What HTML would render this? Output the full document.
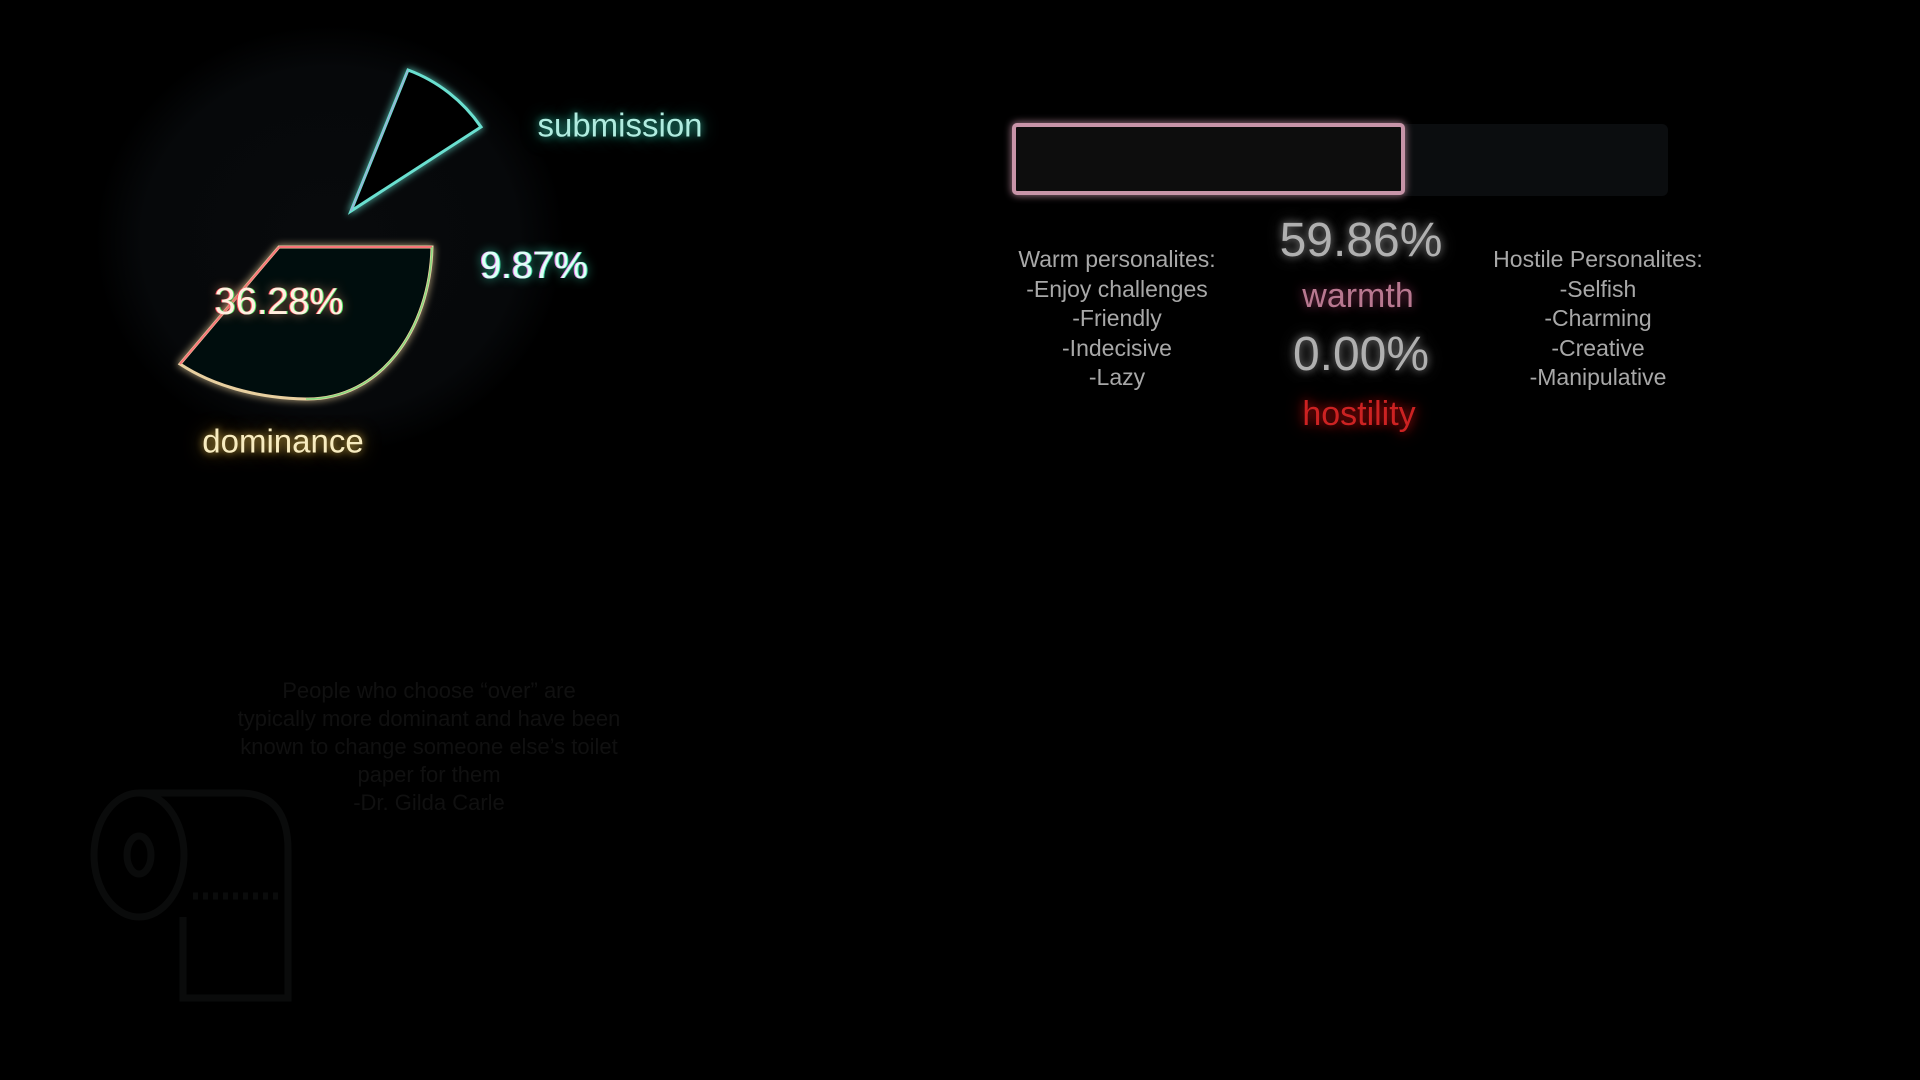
<!DOCTYPE html>
<html><head><meta charset="utf-8"><style>
html,body{margin:0;padding:0;background:#000;width:1920px;height:1080px;overflow:hidden;font-family:"Liberation Sans",sans-serif}
.t{position:absolute;white-space:nowrap;transform:translate(-50%,-50%);line-height:1}
.list{position:absolute;text-align:center;color:#a8a8a8;font-size:23px;line-height:29.5px;transform:translateX(-50%);white-space:nowrap}
</style></head><body>
<svg width="1920" height="1080" style="position:absolute;left:0;top:0">
<defs>
<filter id="g" x="-50%" y="-50%" width="200%" height="200%"><feGaussianBlur stdDeviation="4" result="b"/><feMerge><feMergeNode in="b"/><feMergeNode in="SourceGraphic"/></feMerge></filter>
<radialGradient id="bg" cx="50%" cy="50%" r="50%"><stop offset="0" stop-color="#080a0c"/><stop offset="0.8" stop-color="#06080a"/><stop offset="1" stop-color="#000"/></radialGradient>
</defs>
<ellipse cx="330" cy="240" rx="235" ry="215" fill="url(#bg)"/>
<!-- submission slice -->
<path d="M408,70 L351,211 L481,127 A153 153 0 0 0 408,70 Z" fill="#030404" stroke="#6ae0d0" stroke-width="3" filter="url(#g)"/>
<path d="M408,70 L351,211" stroke="#e070e0" stroke-width="1" opacity="0.6"/>
<!-- dominance slice -->
<path d="M279,247 L432,247 C430,330 380,400 306,399 C255,398 212,385 180,364 Z" fill="#060809" stroke="#e8d0a0" stroke-width="3" filter="url(#g)"/>
<path d="M279,247 L432,247 M279,247 L180,364" stroke="#ff6070" stroke-width="2" opacity="0.8"/>
<path d="M432,247 C430,330 380,400 306,399" stroke="#60e070" stroke-width="1.5" fill="none" opacity="0.7"/>
<!-- bar -->
<rect x="1400" y="124" width="268" height="72" rx="6" fill="#0b0d0f"/>
<rect x="1014" y="125" width="389" height="68" rx="3" fill="#0d0e10" stroke="#c894a8" stroke-width="4" filter="url(#g)"/>
<!-- toilet roll -->
<g fill="none" stroke="#0a0b0b" stroke-width="7">
<ellipse cx="139" cy="855" rx="45" ry="62"/>
<ellipse cx="139" cy="855" rx="12" ry="19"/>
<path d="M139,793 L240,793 Q288,793 288,850 L288,998 L183,998 L183,917"/>
<path d="M193,896 L282,896" stroke-dasharray="5 5"/>
</g>
</svg>
<div class="t" style="left:620px;top:125px;font-size:33px;color:#b0ece0;text-shadow:0 0 8px #2ea890,0 0 18px #1a7a68">submission</div>
<div class="t" style="left:534px;top:266px;font-size:38px;color:#e0fff8;text-shadow:-1px 0 #e070e0,1px 0 #40e0a0,0 0 10px #30c0a0">9.87%</div>
<div class="t" style="left:279px;top:302px;font-size:38px;color:#fff0e0;text-shadow:-1px 0 #ff5060,1px 0 #50e060,0 0 10px #c08060">36.28%</div>
<div class="t" style="left:283px;top:441px;font-size:33px;color:#f8ecc0;text-shadow:0 0 8px #c0a040,0 0 18px #806020">dominance</div>

<div class="list" style="left:1117px;top:245px">Warm personalites:<br>-Enjoy challenges<br>-Friendly<br>-Indecisive<br>-Lazy</div>
<div class="list" style="left:1598px;top:245px">Hostile Personalites:<br>-Selfish<br>-Charming<br>-Creative<br>-Manipulative</div>

<div class="t" style="left:1361px;top:241px;font-size:48px;color:#b0b0b0;text-shadow:0 0 8px #777,0 0 16px #444">59.86%</div>
<div class="t" style="left:1358px;top:296px;font-size:34px;color:#b87890;text-shadow:0 0 10px #803050">warmth</div>
<div class="t" style="left:1361px;top:355px;font-size:48px;color:#b0b0b0;text-shadow:0 0 8px #777,0 0 16px #444">0.00%</div>
<div class="t" style="left:1359px;top:414px;font-size:34px;color:#cc2222;text-shadow:0 0 10px #a01010,0 0 18px #700">hostility</div>

<div style="position:absolute;left:429px;top:677px;transform:translateX(-50%);text-align:center;color:#101010;font-size:22px;line-height:28px;white-space:nowrap">People who choose “over” are<br>typically more dominant and have been<br>known to change someone else’s toilet<br>paper for them<br>-Dr. Gilda Carle</div>
</body></html>
